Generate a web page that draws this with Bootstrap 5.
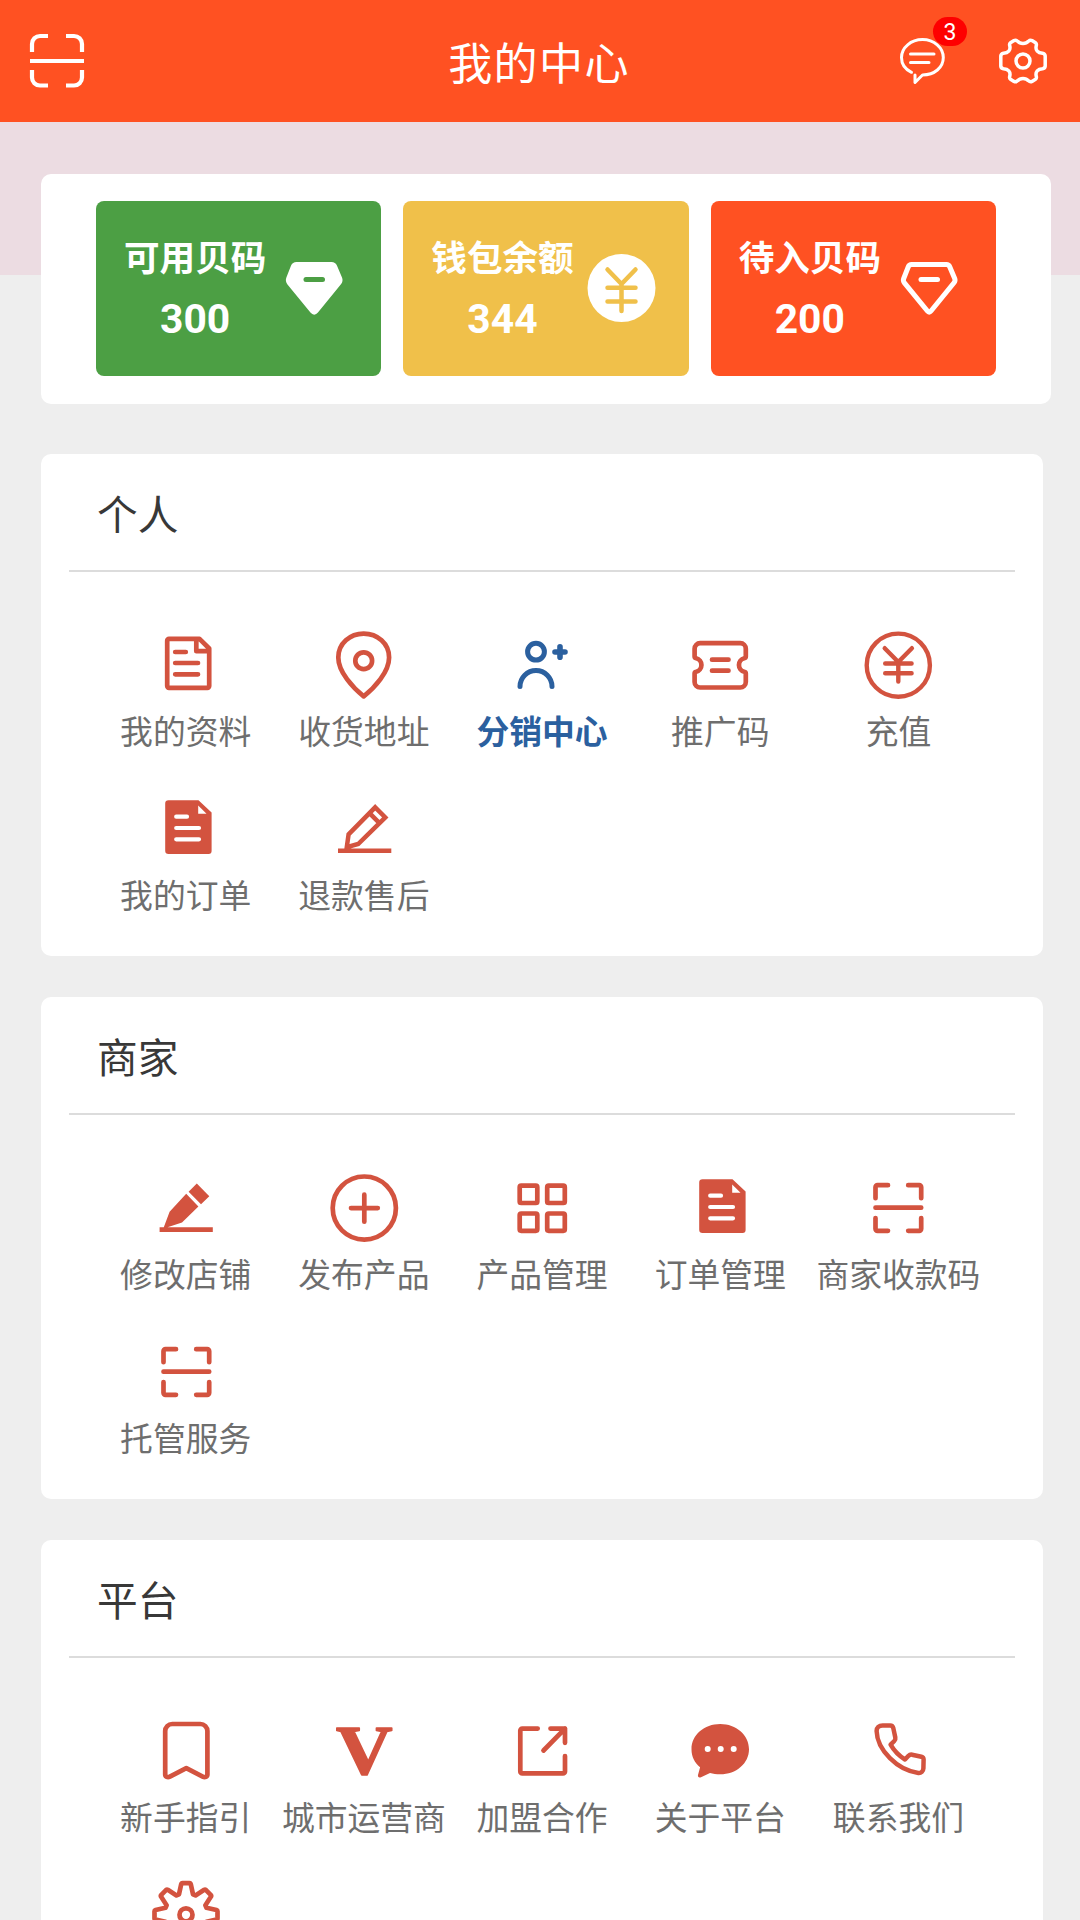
<!DOCTYPE html>
<html lang="zh-CN">
<head>
<meta charset="utf-8">
<meta name="viewport" content="width=device-width, initial-scale=1">
<title>我的中心</title>
<link href="https://cdn.jsdelivr.net/npm/bootstrap@5.3.0/dist/css/bootstrap.min.css" rel="stylesheet">
<style>
  body { background: #eee; font-family: Roboto, "Noto Sans CJK SC", sans-serif; }
  .screen { height: 1920px; }
  svg { display: block; flex: none; fill: none; stroke: currentColor; stroke-linecap: round; stroke-linejoin: round; overflow: visible; }
  .topbar { height: 122px; background: #ff5122; color: #fff; padding: 0 32px 0 30px; }
  .topbar-side { width: 148px; }
  .topbar h1 { font-size: 44px; letter-spacing: 1.4px; line-height: 60px; margin: 8px 0 0; }
  .scan-btn { stroke-linecap: butt; }
  .msg-badge { width: 34px; height: 29px; left: 33px; top: -21px; background: #fe0000; font-size: 23px; line-height: 31px; }
  .hero { height: 153px; background: #ecdce2; padding: 52px 29px 0 41px; }
  .wallet { height: 230px; border-radius: 10px; padding: 27px 55px 28px; gap: 22px; }
  .tile { flex: 1 1 0; min-width: 0; border-radius: 8px; color: #fff; padding-left: 28px; gap: 13px; }
  .tile svg { margin-top: -2px; }
  .tile-name { font-size: 35.6px; line-height: 60px; font-weight: 700; white-space: nowrap; }
  .tile-num { font-size: 40.8px; line-height: 60px; font-weight: 700; }
  .t-green { background: #4c9f44; } .t-gold { background: #f0c04a; } .t-red { background: #ff5122; }
  .panels { padding: 179px 37px 0 41px; gap: 41px; }
  .panel { height: 502px; border-radius: 10px; padding: 0 28px; flex: none; }
  .panel h2 { height: 118px; border-bottom: 2px solid #dcdcdc; padding: 33px 0 0 28px; margin: 0; font-size: 40.700px; line-height: 58px; color: #383838; font-weight: 400; }
  .tools { padding: 56px 26px 0 27.600px; row-gap: 32px; }
  .tool { width: 178.2px; height: 132px; color: #d3533f; stroke-width: 4.7; }
  .tool span { font-size: 32.8px; line-height: 48px; margin-top: 9px; color: #6e6e6e; white-space: nowrap; }
  .tool.is-active, .tool.is-active span { color: #2b609f; font-weight: 700; }
</style>
</head>
<body>
<svg width="0" height="0" class="position-absolute">
  <defs>
    <symbol id="doc" viewBox="0 0 72 72"><path d="M19 10.9H49.5L59.2 20.500V58a1.800 1.800 0 0 1-1.800 1.800H19a1.800 1.800 0 0 1-1.800-1.800V12.700a1.800 1.800 0 0 1 1.800-1.800zM46.300 11.500V23.200H58.500M25.200 24H35.800M25.200 35H48M25.200 46.300H48"/></symbol>
    <symbol id="docfill" viewBox="0 0 72 72"><path fill="currentColor" stroke="none" d="M18.500 8.300H48.500L61.600 20.500V59a3 3 0 0 1-3 3H18.500a3.300 3.300 0 0 1-3.300-3.300V11.600a3.300 3.300 0 0 1 3.300-3.300z"/><path fill="#fff" stroke="none" d="M48.200 13.600V21.700H56.500z"/><path stroke="#fff" stroke-width="4.200" d="M26.200 24.700H37M26.200 36H49M26.200 47.300H49"/></symbol>
    <symbol id="pin" viewBox="0 0 72 72"><path d="M35.700 68.300C25 60 10.300 44 10.300 29.500C10.300 15.500 22 5.600 35.700 5.600S61.100 15.500 61.100 29.500C61.100 44 46.500 60 35.700 68.300z"/><circle cx="35.700" cy="32.700" r="8.400"/></symbol>
    <symbol id="user" viewBox="0 0 72 72"><g stroke-width="5"><circle cx="30" cy="23.700" r="8.400"/><path d="M14 58.500A16 16 0 0 1 46 58.500"/><path stroke-width="5.600" d="M49 24H59M54 18.800V29.200"/></g></symbol>
    <symbol id="ticket" viewBox="0 0 72 72"><path d="M16.100 15.200H56.300a5.500 5.500 0 0 1 5.500 5.500V28.500q0 1.500-1.500 1.700a7 7 0 0 0 0 13.600q1.500.2 1.500 1.700V54a5.500 5.500 0 0 1-5.500 5.500H16.100a5.500 5.500 0 0 1-5.500-5.500V45.500q0-1.500 1.500-1.700a7 7 0 0 0 0-13.600q-1.500-.2-1.500-1.700V20.700a5.500 5.500 0 0 1 5.500-5.500zM28 31.700H44.500M28 42.700H44.500"/></symbol>
    <symbol id="yen" viewBox="0 0 72 72"><g stroke-width="4.400"><circle cx="36.300" cy="37.200" r="31.600"/><path d="M22.700 20.200L36.300 34L49.900 20.200M23.200 35.500H49.600M23.200 45.300H49.600M36.300 34V53.500"/></g></symbol>
    <symbol id="pencil" viewBox="0 0 72 72"><path stroke-linecap="butt" stroke-linejoin="miter" stroke-width="4.500" d="M47.200 15.300L57.300 25.400L30.200 52L18.800 55.200L20.600 42.300ZM41.500 21.200L51.500 31.200M10 58.700H63.300"/></symbol>
    <symbol id="pencilfill" viewBox="0 0 72 72"><path fill="currentColor" stroke="none" d="M46.800 12.500L59.300 25.300L51 33.300L38.600 20.800zM36.200 22.800L48.400 35.600L32 51.500L17.500 56.300V61H9.600V56.200H13.800L19.600 40.700zM13 56.200H62.800V61H13z"/></symbol>
    <symbol id="plus" viewBox="0 0 72 72"><circle cx="36.300" cy="37.100" r="31.600"/><path d="M23 37.100H49.800M36.300 23.700V50.700"/></symbol>
    <symbol id="apps" viewBox="0 0 72 72"><rect x="13.700" y="14.700" width="17.600" height="17.300" rx="1.500"/><rect x="41.200" y="14.700" width="17.600" height="17.300" rx="1.500"/><rect x="13.700" y="42.500" width="17.600" height="17.300" rx="1.500"/><rect x="41.200" y="42.500" width="17.600" height="17.300" rx="1.500"/></symbol>
    <symbol id="scan" viewBox="0 0 72 72"><path d="M26 14.200H15.500a2 2 0 0 0-2 2V27.200M46.200 14.200H57.200a2 2 0 0 1 2 2V27.200M13.500 47V57.800a2 2 0 0 0 2 2H26M59.200 47V57.800a2 2 0 0 1-2 2H46.200M13.500 36.700H59.200"/></symbol>
    <symbol id="bookmark" viewBox="0 0 72 72"><path d="M15.200 60.500V17a7 7 0 0 1 7-7H50.400a7 7 0 0 1 7 7V60.500c0 2.400-2.500 3.300-4.700 2.200L36.300 54.200L19.900 62.700c-2.200 1.100-4.700.2-4.700-2.200z"/></symbol>
    <symbol id="share" viewBox="0 0 72 72"><path d="M31.700 14.600H16.300a2 2 0 0 0-2 2V57.400a2 2 0 0 0 2 2H57a2 2 0 0 0 2-2V42M44.500 14.600H59V28.800M59 14.600L37.500 36.500"/></symbol>
    <symbol id="talk" viewBox="0 0 72 72"><path fill="currentColor" stroke="none" d="M36.200 10C52.200 10 65 21 65 35.200S52.200 60.300 36.200 60.300C32.500 60.300 29 59.900 26 59L17 63.200C15 64 13.500 63 14 61L16.100 53.300C10.500 48.600 7.500 42.500 7.500 35.200C7.500 21 20.200 10 36.200 10z"/><g fill="#fff" stroke="none"><circle cx="23.700" cy="35" r="3"/><circle cx="36.700" cy="35" r="3"/><circle cx="49.700" cy="35" r="3"/></g></symbol>
    <symbol id="phone" viewBox="0 0 72 72"><path stroke-width="4.500" d="M20.600 11.500H28.200c1.800 0 2.700 1 3.100 2.600L33.300 23.500c.3 1.500 0 2.500-1 3.500l-3.700 3.700C32.200 37 37.200 42 43 45.500l3.500-3.700c1-1 2.200-1.400 3.600-1.100l9.300 2c1.500.4 2.200 1.500 2.200 2.900l-.2 8.700c-.2 3-2.300 4.900-5.100 4.600C35.700 56.500 15.100 36 14.600 17c0-3.300 2.400-5.500 6-5.500z"/></symbol>
    <symbol id="cog" viewBox="0 0 72 72"><g transform="translate(36 36.800)"><path d="M-7-20.500L-4.800-30.500Q-4.500-31.700-3.500-31.700H3.500Q4.500-31.700 4.800-30.500L7-20.500L9.500-19.400L18.200-25Q19.100-25.500 20-24.700L24.700-20Q25.500-19.100 25-18.200L19.400-9.500L20.500-7L30.500-4.800Q31.500-4.500 31.500-3.500V3.500Q31.500 4.500 30.500 4.800L20.500 7L19.400 9.500L25.500 19.100L19.100 25.500L9.500 19.400L7 20.500L4.500 31.500H-4.500L-7 20.500L-9.500 19.400L-19.100 25.500L-25.500 19.100L-19.400 9.500L-20.500 7L-30.500 4.800Q-31.500 4.500-31.500 3.500V-3.500Q-31.500-4.500-30.500-4.800L-20.500-7L-19.400-9.500L-25-18.200Q-25.500-19.100-24.700-20L-20-24.700Q-19.100-25.500-18.200-25L-9.500-19.400z"/><circle r="6.500"/></g></symbol>
  </defs>
</svg>

<div class="screen overflow-hidden">
<header class="topbar d-flex align-items-center justify-content-between">
  <div class="topbar-side">
    <svg class="scan-btn" width="54" height="54" viewBox="0 0 54 54" stroke-width="4.200"><path d="M18 2H10a8 8 0 0 0-8 8V18M36 2H44a8 8 0 0 1 8 8V18M2 36V43.500a8 8 0 0 0 8 8H18M52 36V43.500a8 8 0 0 1-8 8H36M0 27H54"/></svg>
  </div>
  <h1 class="fw-normal text-center">我的中心</h1>
  <div class="topbar-side d-flex justify-content-between">
    <div class="position-relative">
      <svg width="46" height="46" viewBox="0 0 46 46" stroke-width="3"><path d="M11.500 34.300C5.500 31.500 1.500 26 1.500 19.500C1.500 9.500 11 1.600 22.500 1.600S43.300 9.500 43.300 19.500S34.500 37 22.500 37L15 44.500V37M10.500 16H34M10.500 24.500H29"/></svg>
      <span class="msg-badge position-absolute rounded-pill text-center">3</span>
    </div>
    <svg width="50" height="46" viewBox="-25 -23 50 46" stroke-width="3.500"><path d="M0-17.500Q3.500-17.500 5.500-19.800Q7.200-21.300 9-20.400L12.500-18.300Q13.800-17.400 13.300-15.500C12-10.500 15-8 19.500-7.700Q22-7.300 22.200-5V5Q22 7.300 19.500 7.700C15 8 12 10.500 13.300 15.500Q13.800 17.400 12.500 18.300L9 20.400Q7.200 21.300 5.500 19.800Q3.500 17.500 0 17.500Q-3.500 17.500-5.500 19.800Q-7.200 21.300-9 20.400L-12.500 18.300Q-13.800 17.400-13.300 15.500C-12 10.500-15 8-19.500 7.700Q-22 7.300-22.200 5V-5Q-22-7.300-19.500-7.700C-15-8-12-10.500-13.300-15.500Q-13.800-17.400-12.500-18.300L-9-20.400Q-7.200-21.300-5.500-19.800Q-3.500-17.500 0-17.500z"/><circle r="7"/></svg>
  </div>
</header>

<section class="hero">
  <div class="wallet bg-white d-flex">
    <div class="tile t-green d-flex align-items-center">
      <div class="text-center"><div class="tile-name">可用贝码</div><div class="tile-num">300</div></div>
      <svg width="68" height="68" viewBox="0 0 68 68" stroke-width="5"><path fill="currentColor" d="M17.500 10.500H52.500Q54.800 10.500 55.600 12.500L60.700 24.500Q61.600 26.800 60 28.800L37 57Q35.200 59.300 33.400 57L10.400 28.800Q8.800 26.800 9.700 24.500L14.400 12.500Q15.200 10.500 17.500 10.500z"/><path stroke="#4c9f44" d="M27 25.500H43.500"/></svg>
    </div>
    <div class="tile t-gold d-flex align-items-center">
      <div class="text-center"><div class="tile-name">钱包余额</div><div class="tile-num">344</div></div>
      <svg width="68" height="68" viewBox="0 0 68 68" stroke-width="4.500"><circle cx="34.500" cy="34" r="34" fill="currentColor" stroke="none"/><path stroke="#f0c04a" d="M20.500 15.500L34.500 30L48.500 15.500M20.500 33.700H48.500M20.500 47.500H48.500M34.500 30V57"/></svg>
    </div>
    <div class="tile t-red d-flex align-items-center">
      <div class="text-center"><div class="tile-name">待入贝码</div><div class="tile-num">200</div></div>
      <svg width="68" height="68" viewBox="0 0 68 68" stroke-width="5"><path d="M17.500 10.500H52.500Q54.800 10.500 55.600 12.500L60.700 24.500Q61.600 26.800 60 28.800L37 57Q35.200 59.300 33.400 57L10.400 28.800Q8.800 26.800 9.700 24.500L14.400 12.500Q15.200 10.500 17.500 10.500z"/><path d="M27 25.500H43.500"/></svg>
    </div>
  </div>
</section>

<main class="panels d-flex flex-column">
  <section class="panel bg-white">
    <h2>个人</h2>
    <div class="tools d-flex flex-wrap">
      <div class="tool d-flex flex-column align-items-center"><svg width="72" height="72"><use href="#doc"/></svg><span>我的资料</span></div>
      <div class="tool d-flex flex-column align-items-center"><svg width="72" height="72"><use href="#pin"/></svg><span>收货地址</span></div>
      <div class="tool is-active d-flex flex-column align-items-center"><svg width="72" height="72"><use href="#user"/></svg><span>分销中心</span></div>
      <div class="tool d-flex flex-column align-items-center"><svg width="72" height="72"><use href="#ticket"/></svg><span>推广码</span></div>
      <div class="tool d-flex flex-column align-items-center"><svg width="72" height="72"><use href="#yen"/></svg><span>充值</span></div>
      <div class="tool d-flex flex-column align-items-center"><svg width="72" height="72"><use href="#docfill"/></svg><span>我的订单</span></div>
      <div class="tool d-flex flex-column align-items-center"><svg width="72" height="72"><use href="#pencil"/></svg><span>退款售后</span></div>
    </div>
  </section>
  <section class="panel bg-white">
    <h2>商家</h2>
    <div class="tools d-flex flex-wrap">
      <div class="tool d-flex flex-column align-items-center"><svg width="72" height="72"><use href="#pencilfill"/></svg><span>修改店铺</span></div>
      <div class="tool d-flex flex-column align-items-center"><svg width="72" height="72"><use href="#plus"/></svg><span>发布产品</span></div>
      <div class="tool d-flex flex-column align-items-center"><svg width="72" height="72"><use href="#apps"/></svg><span>产品管理</span></div>
      <div class="tool d-flex flex-column align-items-center"><svg width="72" height="72"><use href="#docfill"/></svg><span>订单管理</span></div>
      <div class="tool d-flex flex-column align-items-center"><svg width="72" height="72"><use href="#scan"/></svg><span>商家收款码</span></div>
      <div class="tool d-flex flex-column align-items-center"><svg width="72" height="72"><use href="#scan"/></svg><span>托管服务</span></div>
    </div>
  </section>
  <section class="panel bg-white">
    <h2>平台</h2>
    <div class="tools d-flex flex-wrap">
      <div class="tool d-flex flex-column align-items-center"><svg width="72" height="72"><use href="#bookmark"/></svg><span>新手指引</span></div>
      <div class="tool d-flex flex-column align-items-center"><svg width="72" height="72" viewBox="0 0 72 72"><text x="8" y="59.800" textLength="56.500" lengthAdjust="spacingAndGlyphs" font-family="Liberation Serif, serif" font-weight="700" font-size="69" fill="currentColor" stroke-width="1.600">V</text></svg><span>城市运营商</span></div>
      <div class="tool d-flex flex-column align-items-center"><svg width="72" height="72"><use href="#share"/></svg><span>加盟合作</span></div>
      <div class="tool d-flex flex-column align-items-center"><svg width="72" height="72"><use href="#talk"/></svg><span>关于平台</span></div>
      <div class="tool d-flex flex-column align-items-center"><svg width="72" height="72"><use href="#phone"/></svg><span>联系我们</span></div>
      <div class="tool d-flex flex-column align-items-center"><svg width="72" height="72"><use href="#cog"/></svg></div>
    </div>
  </section>
</main>
</div>
<script src="https://cdn.jsdelivr.net/npm/bootstrap@5.3.0/dist/js/bootstrap.bundle.min.js"></script>
</body>
</html>
